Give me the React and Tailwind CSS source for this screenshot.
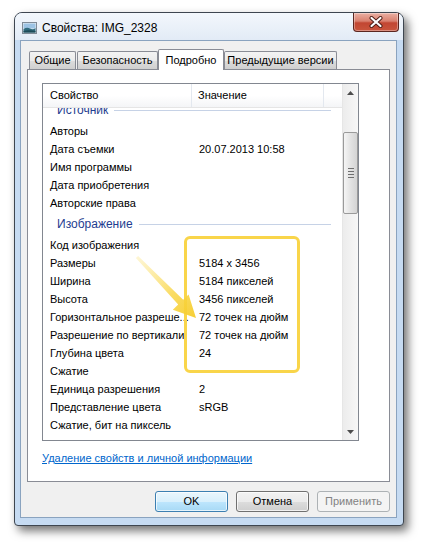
import React from "react";

const groups = [
  {
    title: "Источник",
    rows: [
      ["Авторы", ""],
      ["Дата съемки", "20.07.2013 10:58"],
      ["Имя программы", ""],
      ["Дата приобретения", ""],
      ["Авторские права", ""],
    ],
  },
  {
    title: "Изображение",
    rows: [
      ["Код изображения", ""],
      ["Размеры", "5184 x 3456"],
      ["Ширина", "5184 пикселей"],
      ["Высота", "3456 пикселей"],
      ["Горизонтальное разреше...", "72 точек на дюйм"],
      ["Разрешение по вертикали", "72 точек на дюйм"],
      ["Глубина цвета", "24"],
      ["Сжатие", ""],
      ["Единица разрешения", "2"],
      ["Представление цвета", "sRGB"],
      ["Сжатие, бит на пиксель", ""],
    ],
  },
];

function TitleIcon() {
  return (
    <svg width="15" height="12" viewBox="0 0 15 12">
      <rect x="0.5" y="0.5" width="14" height="11" fill="#e8eef4" stroke="#7f8a96" />
      <rect x="1.5" y="1.5" width="12" height="5" fill="#9cc3e4" />
      <path d="M1.5 7 Q5 4.8 8 6.5 T13.5 6 V10.5 H1.5 Z" fill="#2f6b7e" />
      <path d="M1.5 9 Q6 7.5 13.5 9 V10.5 H1.5 Z" fill="#1d4b58" />
    </svg>
  );
}

function CloseButton() {
  return (
    <div className="w-[46px] h-[19px] rounded-b-[4px] border border-t-0 border-[#5b2620] bg-[linear-gradient(#eab0a3_0%,#d9806f_45%,#c24632_55%,#c9553d_100%)] flex items-center justify-center shadow-[inset_0_0_0_1px_rgba(255,255,255,0.35)]">
      <svg width="14" height="12" viewBox="0 0 14 12">
        <path d="M2.5 2 L11.5 10 M11.5 2 L2.5 10" stroke="#4a1b14" strokeWidth="4" strokeLinecap="round" />
        <path d="M2.5 2 L11.5 10 M11.5 2 L2.5 10" stroke="#ffffff" strokeWidth="2.2" strokeLinecap="round" />
      </svg>
    </div>
  );
}

function Scrollbar() {
  return (
    <div className="w-[16px] h-full flex flex-col border-l border-[#e6e6e6] bg-[linear-gradient(to_right,#ececec,#f7f7f7)]">
      <div className="h-[17px] flex items-center justify-center">
        <svg width="7" height="4" viewBox="0 0 7 4"><path d="M0 4 L3.5 0 L7 4 Z" fill="#4d4d4d" /></svg>
      </div>
      <div className="h-[31px]" />
      <div className="h-[82px] rounded-[2px] border border-[#9a9a9a] bg-[linear-gradient(to_right,#f5f5f5,#e1e1e1_55%,#d4d4d4)] flex flex-col items-center justify-center gap-[2px]">
        <div className="w-[6px] h-px bg-[#6f6f6f]" />
        <div className="w-[6px] h-px bg-[#6f6f6f]" />
        <div className="w-[6px] h-px bg-[#6f6f6f]" />
        <div className="w-[6px] h-px bg-[#6f6f6f]" />
      </div>
      <div className="flex-1" />
      <div className="h-[17px] flex items-center justify-center">
        <svg width="7" height="4" viewBox="0 0 7 4"><path d="M0 0 L3.5 4 L7 0 Z" fill="#4d4d4d" /></svg>
      </div>
    </div>
  );
}

function Tab({ label, w, selected }) {
  if (selected) {
    return (
      <div className={`${w} h-[21px] -mb-px relative z-10 border border-b-0 border-[#898c95] bg-white rounded-t-[2px] flex items-center justify-center text-black whitespace-nowrap`}>
        {label}
      </div>
    );
  }
  return (
    <div className={`${w} h-[18px] border border-b-0 border-[#898c95] bg-[linear-gradient(#f3f3f3,#ebebeb_50%,#dddddd_51%,#cfcfcf)] rounded-t-[2px] flex items-center justify-center text-black whitespace-nowrap`}>
      {label}
    </div>
  );
}

export default function App() {
  return (
    <div className="w-[423px] h-[546px] bg-white pl-[14px] pt-[12px] relative overflow-hidden font-['Liberation_Sans',Arial,sans-serif] text-[11px] text-black">
      <div className="w-[390px] h-[514px] rounded-t-[8px] rounded-b-[4px] border border-[#3e4650] bg-[#c6dbf2] shadow-[4px_5px_10px_rgba(0,0,0,0.55)] flex flex-col">
        {/* title bar */}
        <div className="h-[27px] rounded-t-[7px] bg-[linear-gradient(#f3f7fc,#e2ebf6)] flex items-start shrink-0">
          <div className="pl-[7px] pt-[9px]">
            <TitleIcon />
          </div>
          <div className="pl-[5px] pt-[7px] leading-[16px] text-[12px] text-black">Свойства: IMG_2328</div>
          <div className="flex-1" />
          <div className="mr-[4px]">
            <CloseButton />
          </div>
        </div>
        {/* content */}
        <div className="ml-[5px] mr-[6px] w-[377px] h-[478px] border border-[#8aa3bf] bg-[#f0f0f0] flex flex-col">
          {/* tabs */}
          <div className="flex items-end h-[20px] mt-[8px] ml-[8px]">
            <Tab label="Общие" w="w-[47px]" />
            <div className="w-[1px]" />
            <Tab label="Безопасность" w="w-[81px]" />
            <Tab label="Подробно" w="w-[66px]" selected />
            <Tab label="Предыдущие версии" w="w-[113px]" />
          </div>
          {/* panel */}
          <div className="ml-[6px] w-[363px] h-[413px] border border-[#898c95] bg-white flex flex-col">
            <div className="ml-[14px] mt-[13px] w-[317px] h-[358px] border border-[#828790] bg-white flex">
              <div className="flex-1 flex flex-col min-w-0">
                {/* header */}
                <div className="h-[24px] shrink-0 flex border-b border-[#e5e5e5] bg-[linear-gradient(#ffffff,#ffffff_50%,#f4f5f7)]">
                  <div className="w-[149px] pl-[7px] flex items-center border-r border-[#e3e8ef]">Свойство</div>
                  <div className="w-[132px] pl-[6px] flex items-center border-r border-[#e3e8ef]">Значение</div>
                  <div className="flex-1" />
                </div>
                {/* rows */}
                <div className="flex-1 overflow-hidden">
                  <div className="-mt-[10px]">
                    {groups.map((g) => (
                      <div key={g.title}>
                        <div className="h-[24px] flex items-center pl-[14px] pr-[11px]">
                          <span className="text-[#1e3d8f] text-[12px] whitespace-nowrap">{g.title}</span>
                          <div className="flex-1 h-px bg-[#c6d2e6] ml-[6px]" />
                        </div>
                        {g.rows.map(([k, v]) => (
                          <div key={k} className="h-[18px] flex items-center whitespace-nowrap">
                            <div className="w-[149px] pl-[7px] overflow-hidden">{k}</div>
                            <div className="pl-[7px]">{v}</div>
                          </div>
                        ))}
                      </div>
                    ))}
                  </div>
                </div>
              </div>
              <Scrollbar />
            </div>
            <div className="ml-[14px] mt-[10px] leading-[15px]">
              <span className="text-[#0066cc] underline">Удаление свойств и личной информации</span>
            </div>
          </div>
          {/* buttons */}
          <div className="mt-[9px] mr-[6px] flex justify-end gap-[8px]">
            <div className="w-[73px] h-[21px] rounded-[3px] border border-[#3c7fb1] bg-[linear-gradient(#eaf6fd,#d9f0fc_50%,#bee6fd_51%,#a7d9f5)] shadow-[inset_0_0_0_1px_rgba(255,255,255,0.7)] flex items-center justify-center">OK</div>
            <div className="w-[73px] h-[21px] rounded-[3px] border border-[#707070] bg-[linear-gradient(#f2f2f2,#ebebeb_50%,#dddddd_51%,#cfcfcf)] shadow-[inset_0_0_0_1px_rgba(255,255,255,0.7)] flex items-center justify-center">Отмена</div>
            <div className="w-[73px] h-[21px] rounded-[3px] border border-[#adb2b5] bg-[#f4f4f4] flex items-center justify-center text-[#838383]">Применить</div>
          </div>
        </div>
      </div>

      {/* highlight overlay */}
      <div className="absolute left-[184px] top-[236px] w-[116px] h-[137px] border-[3px] border-[#f9d54a] rounded-[6px] pointer-events-none" />
      <svg className="absolute left-0 top-0 pointer-events-none" width="423" height="546" viewBox="0 0 423 546">
        <defs>
          <linearGradient id="arr" x1="137" y1="257" x2="196" y2="318" gradientUnits="userSpaceOnUse">
            <stop offset="0" stopColor="#fbe585" stopOpacity="0.35" />
            <stop offset="0.6" stopColor="#f9d648" stopOpacity="0.85" />
            <stop offset="1" stopColor="#f6cc2a" stopOpacity="0.95" />
          </linearGradient>
        </defs>
        <polygon
          points="138.1,256 183.2,299.8 188.6,294.6 196,318 172.8,309.8 178.2,304.6 135.9,258"
          fill="url(#arr)"
        />
      </svg>
    </div>
  );
}
